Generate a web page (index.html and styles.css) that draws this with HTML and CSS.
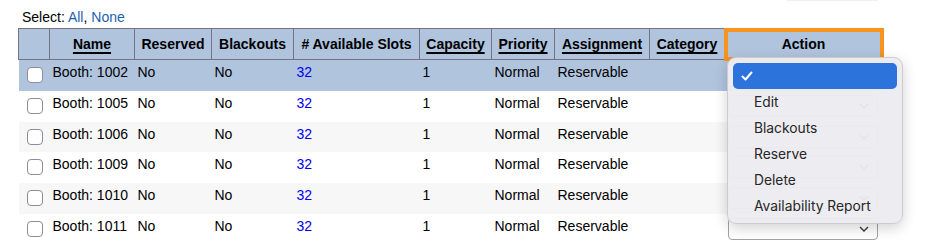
FILE: index.html
```html
<!doctype html>
<html lang="en">
<head>
    <meta charset="UTF-8">
    <title>Resources</title>
    <link rel="stylesheet" href="styles.css">
</head>
<body>
<div class="topline"></div>
<div class="select-line">Select: <a href="#">All</a>, <a href="#">None</a></div>
<table class="resources">
    <colgroup>
        <col style="width:31px">
        <col style="width:85px">
        <col style="width:77px">
        <col style="width:82px">
        <col style="width:126px">
        <col style="width:72px">
        <col style="width:63px">
        <col style="width:95px">
        <col style="width:75px">
        <col style="width:158px">
    </colgroup>
    <thead>
    <tr>
        <th></th>
        <th><a href="#">Name</a></th>
        <th>Reserved</th>
        <th>Blackouts</th>
        <th># Available Slots</th>
        <th><a href="#">Capacity</a></th>
        <th><a href="#">Priority</a></th>
        <th><a href="#">Assignment</a></th>
        <th><a href="#">Category</a></th>
        <th class="action">Action</th>
    </tr>
    </thead>
    <tbody>
    <tr class="selected">
        <td><input type="checkbox"></td>
        <td>Booth: 1002</td><td>No</td><td>No</td><td><a class="slots" href="#">32</a></td>
        <td>1</td><td>Normal</td><td>Reservable</td><td></td>
        <td><div class="sel"><svg width="10" height="6" viewBox="0 0 10 6"><polyline points="1,1 5,5 9,1" fill="none" stroke="#444" stroke-width="1.5"/></svg></div></td>
    </tr>
    <tr>
        <td><input type="checkbox"></td>
        <td>Booth: 1005</td><td>No</td><td>No</td><td><a class="slots" href="#">32</a></td>
        <td>1</td><td>Normal</td><td>Reservable</td><td></td>
        <td><div class="sel"><svg width="10" height="6" viewBox="0 0 10 6"><polyline points="1,1 5,5 9,1" fill="none" stroke="#444" stroke-width="1.5"/></svg></div></td>
    </tr>
    <tr class="alt short">
        <td><input type="checkbox"></td>
        <td>Booth: 1006</td><td>No</td><td>No</td><td><a class="slots" href="#">32</a></td>
        <td>1</td><td>Normal</td><td>Reservable</td><td></td>
        <td><div class="sel"><svg width="10" height="6" viewBox="0 0 10 6"><polyline points="1,1 5,5 9,1" fill="none" stroke="#444" stroke-width="1.5"/></svg></div></td>
    </tr>
    <tr>
        <td><input type="checkbox"></td>
        <td>Booth: 1009</td><td>No</td><td>No</td><td><a class="slots" href="#">32</a></td>
        <td>1</td><td>Normal</td><td>Reservable</td><td></td>
        <td><div class="sel"><svg width="10" height="6" viewBox="0 0 10 6"><polyline points="1,1 5,5 9,1" fill="none" stroke="#444" stroke-width="1.5"/></svg></div></td>
    </tr>
    <tr class="alt">
        <td><input type="checkbox"></td>
        <td>Booth: 1010</td><td>No</td><td>No</td><td><a class="slots" href="#">32</a></td>
        <td>1</td><td>Normal</td><td>Reservable</td><td></td>
        <td><div class="sel"><svg width="10" height="6" viewBox="0 0 10 6"><polyline points="1,1 5,5 9,1" fill="none" stroke="#444" stroke-width="1.5"/></svg></div></td>
    </tr>
    <tr class="short">
        <td><input type="checkbox"></td>
        <td>Booth: 1011</td><td>No</td><td>No</td><td><a class="slots" href="#">32</a></td>
        <td>1</td><td>Normal</td><td>Reservable</td><td></td>
        <td><div class="sel"><svg width="10" height="6" viewBox="0 0 10 6"><polyline points="1,1 5,5 9,1" fill="none" stroke="#444" stroke-width="1.5"/></svg></div></td>
    </tr>
    </tbody>
</table>

<ul class="menu">
    <li class="current"><svg width="12" height="10" viewBox="0 0 12 10"><polyline points="1.5,5.5 4.5,8.5 10.5,1.5" fill="none" stroke="#fff" stroke-width="2" stroke-linecap="round" stroke-linejoin="round"/></svg></li>
    <li>Edit</li>
    <li>Blackouts</li>
    <li>Reserve</li>
    <li>Delete</li>
    <li>Availability Report</li>
</ul>
</body>
</html>
```

FILE: styles.css
```css
body {
    margin: 0;
    font-family: "Liberation Sans", Arial, Helvetica, sans-serif;
    font-size: 14px;
    color: #000;
    background-color: #fff;
}
.topline {
    margin-left: 787px;
    width: 91px;
    height: 1px;
    background-color: #f0f0f0;
}
.select-line {
    margin: 8px 0 3px 22px;
    line-height: 16px;
}
.select-line a {
    color: #1d5fae;
    text-decoration: none;
}
.resources {
    margin-left: 18px;
    width: 864px;
    table-layout: fixed;
    border-collapse: collapse;
}
.resources th {
    height: 30px;
    padding: 0 3px;
    background-color: #b0c4de;
    border: 1px solid #737384;
    font-weight: bold;
    text-align: center;
    white-space: nowrap;
}
.resources th a {
    color: #000;
    text-decoration: underline;
    text-decoration-thickness: 2px;
    text-underline-offset: 3px;
}
.resources th.action {
    outline: 4px solid #f7931e;
    outline-offset: -3px;
}
.resources tbody tr {
    height: 31px;
}
.resources tbody tr.short {
    height: 30px;
}
.resources td {
    padding: 4px 3px 0;
    line-height: 16px;
    vertical-align: top;
    white-space: nowrap;
}
.resources td:first-child,
.resources td:last-child {
    padding: 0;
    vertical-align: middle;
}
.resources tr.selected {
    background-color: #b0c4de;
}
.resources tr.alt {
    background-color: #f7f7f7;
}
.resources input[type=checkbox] {
    appearance: none;
    display: block;
    width: 16px;
    height: 16px;
    margin: 0 0 0 8px;
    border: 1px solid #8c8c9c;
    border-radius: 4px;
    background-color: #fff;
}
.slots {
    color: #0000ee;
    text-decoration: none;
}
.sel {
    display: flex;
    align-items: center;
    justify-content: flex-end;
    box-sizing: border-box;
    width: 150px;
    height: 22px;
    margin-left: 3px;
    padding-right: 8px;
    border: 1px solid #a2a2a8;
    border-radius: 4px;
    background-color: #fff;
}
.menu {
    position: absolute;
    left: 727px;
    top: 57px;
    width: 176px;
    box-sizing: border-box;
    margin: 0;
    padding: 5px 5px 4px;
    list-style: none;
    border: 1px solid #cbcbd0;
    border-radius: 9px;
    background-color: rgba(236, 236, 240, 0.96);
    box-shadow: 0 4px 14px rgba(0, 0, 0, 0.18);
    font-family: Inter, "Liberation Sans", sans-serif;
    font-size: 13.8px;
    color: #262626;
}
.menu li {
    height: 26px;
    line-height: 26px;
    padding-left: 21px;
}
.menu li.current {
    display: flex;
    align-items: center;
    padding-left: 8px;
    border-radius: 5px;
    background-color: #2c74dc;
}
```
